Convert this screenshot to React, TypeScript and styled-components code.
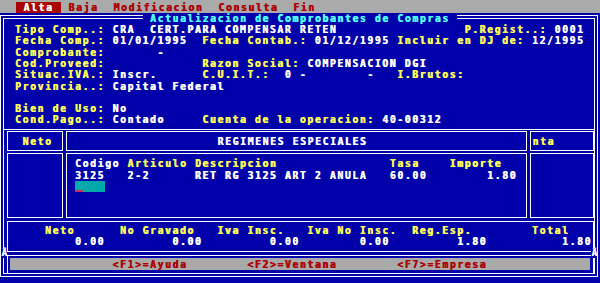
import React from "react";
import styled, { createGlobalStyle } from "styled-components";

const BLUE = "#0000aa";
const YELLOW = "#ffff55";
const WHITE = "#ffffff";
const CYAN = "#55ffff";
const GRAY = "#aaaaaa";
const RED = "#aa0000";
const TEAL = "#00aaaa";
const LINE = "#ffffff";

// text mode cell: 80 x 25 on 600 x 283
const CW = 7.5;
const RH = 11.32;
const FS = 9.7;

const sp = (n: number) => " ".repeat(n);

const GlobalStyle = createGlobalStyle`
	html, body {
		margin: 0;
		padding: 0;
		background: ${BLUE};
	}
	#root {
		width: 600px;
		height: 283px;
	}
`;

const Screen = styled.div`
	position: relative;
	width: 600px;
	height: 283px;
	overflow: hidden;
	background: ${BLUE};
	color: ${WHITE};
	font-family: "DejaVu Sans Mono", "Liberation Mono", monospace;
	font-size: ${FS}px;
	font-weight: bold;
	letter-spacing: ${CW - FS * 0.6021}px;
	line-height: ${RH}px;
	white-space: pre;
	text-shadow: 0.6px 0 0 currentColor;
`;

const MenuBar = styled.div`
	display: flex;
	height: 12.7px;
	padding-left: 16px;
	background: ${GRAY};
`;

const MenuItem = styled.div<{ $active?: boolean }>`
	margin-top: 1.5px;
	height: 11.2px;
	padding: 0 ${CW}px;
	line-height: 11px;
	background: ${(p) => (p.$active ? RED : "transparent")};
	color: ${(p) => (p.$active ? WHITE : RED)};
`;

const Window = styled.div`
	position: relative;
	margin-top: 2.3px;
	width: 598px;
	box-sizing: border-box;
	border: 4px double ${LINE};
`;

const Title = styled.div`
	position: absolute;
	top: -6.3px;
	left: 138.5px;
	background: ${BLUE};
	color: ${CYAN};
`;

const Fields = styled.div`
	padding: 5px 0 0 11px;
`;

const Line = styled.div`
	height: ${RH}px;
`;

const Label = styled.span`
	color: ${YELLOW};
`;

const Value = styled.span`
	color: ${WHITE};
`;

const Divider = styled.div<{ $gap: number }>`
	margin-top: ${(p) => p.$gap}px;
	border-top: 1px solid ${LINE};
`;

const Panels = styled.div`
	display: grid;
	grid-template-columns: 56px 461px 64px;
	grid-template-rows: 20px 65px;
	column-gap: 3px;
	row-gap: 2px;
	margin: 1.5px 0 0 2.5px;
`;

const Cell = styled.div<{ $pad: number; $head?: boolean }>`
	box-sizing: border-box;
	border: 1px solid ${LINE};
	padding-left: ${(p) => p.$pad}px;
	padding-top: ${(p) => (p.$head ? 3.8 : 4)}px;
	overflow: hidden;
`;

const InputField = styled.div`
	position: relative;
	width: ${4 * CW}px;
	height: ${RH}px;
	background: ${TEAL};

	&::after {
		content: "";
		position: absolute;
		left: 0;
		bottom: 0;
		width: ${CW}px;
		height: 2px;
		background: #c83050;
	}
`;

const Totals = styled.div`
	margin: 2.5px 0 0 2.5px;
	width: 587px;
	height: 31px;
	box-sizing: border-box;
	border: 1px solid ${LINE};
	padding: 3px 0 0 37.5px;
`;

const StatusFrame = styled.div`
	margin: 3px 0 0 2.5px;
	width: 587px;
	box-sizing: border-box;
	border: 1px solid ${LINE};
	border-bottom: none;
	padding: 2.5px 2.5px 3px;
`;

const StatusBar = styled.div`
	height: 11.5px;
	padding-left: 102.5px;
	background: ${GRAY};
	color: ${RED};
	line-height: 14.5px;
`;

const Glitch = styled.span<{ $x: number }>`
	position: absolute;
	top: 248px;
	left: ${(p) => p.$x}px;
	padding: 0 0.5px;
	background: ${BLUE};
	font-size: 9px;
	line-height: 10px;
	letter-spacing: 0;
`;

export default function App() {
	return (
		<Screen>
			<GlobalStyle />
			<MenuBar>
				<MenuItem $active>Alta</MenuItem>
				<MenuItem>Baja</MenuItem>
				<MenuItem>Modificacion</MenuItem>
				<MenuItem>Consulta</MenuItem>
				<MenuItem>Fin</MenuItem>
			</MenuBar>

			<Window>
				<Title>{" Actualizacion de Comprobantes de Compras "}</Title>

				<Fields>
					<Line>
						<Label>{"Tipo Comp..: "}</Label>
						<Value>{"CRA  CERT.PARA COMPENSAR RETEN"}</Value>
						{sp(17)}
						<Label>{"P.Regist..: "}</Label>
						<Value>{"0001"}</Value>
					</Line>
					<Line>
						<Label>{"Fecha Comp.: "}</Label>
						<Value>{"01/01/1995"}</Value>
						{sp(2)}
						<Label>{"Fecha Contab.: "}</Label>
						<Value>{"01/12/1995"}</Value>
						{sp(1)}
						<Label>{"Incluir en DJ de: "}</Label>
						<Value>{"12/1995"}</Value>
					</Line>
					<Line>
						<Label>{"Comprobante: "}</Label>
						<Value>{sp(6) + "-"}</Value>
					</Line>
					<Line>
						<Label>{"Cod.Proveed: "}</Label>
						{sp(12)}
						<Label>{"Razon Social: "}</Label>
						<Value>{"COMPENSACION DGI"}</Value>
					</Line>
					<Line>
						<Label>{"Situac.IVA.: "}</Label>
						<Value>{"Inscr."}</Value>
						{sp(6)}
						<Label>{"C.U.I.T.: "}</Label>
						<Value>{" 0 -" + sp(8) + "-"}</Value>
						{sp(3)}
						<Label>{"I.Brutos:"}</Label>
					</Line>
					<Line>
						<Label>{"Provincia..: "}</Label>
						<Value>{"Capital Federal"}</Value>
					</Line>
					<Line />
					<Line>
						<Label>{"Bien de Uso: "}</Label>
						<Value>{"No"}</Value>
					</Line>
					<Line>
						<Label>{"Cond.Pago..: "}</Label>
						<Value>{"Contado"}</Value>
						{sp(5)}
						<Label>{"Cuenta de la operacion: "}</Label>
						<Value>{"40-00312"}</Value>
					</Line>
				</Fields>

				<Divider $gap={3.1} />

				<Panels>
					<Cell $head $pad={15}>
						<Label>Neto</Label>
					</Cell>
					<Cell $head $pad={151}>
						<Value>REGIMENES ESPECIALES</Value>
					</Cell>
					<Cell $head $pad={2}>
						<Label>nta</Label>
					</Cell>

					<Cell $pad={0} />
					<Cell $pad={8.5}>
						<Line>
							<Value>{"Codigo "}</Value>
							<Label>{"Articulo Descripcion" + sp(15) + "Tasa" + sp(4) + "Importe"}</Label>
						</Line>
						<Line>
							<Value>{"3125" + sp(3) + "2-2" + sp(6) + "RET RG 3125 ART 2 ANULA" + sp(3) + "60.00" + sp(8) + "1.80"}</Value>
						</Line>
						<InputField />
					</Cell>
					<Cell $pad={0} />
				</Panels>

				<Totals>
					<Line>
						<Label>{"Neto" + sp(6) + "No Gravado" + sp(3) + "Iva Insc." + sp(3) + "Iva No Insc." + sp(2) + "Reg.Esp." + sp(8) + "Total"}</Label>
					</Line>
					<Line>
						<Value>{sp(4) + "0.00" + sp(9) + "0.00" + sp(9) + "0.00" + sp(8) + "0.00" + sp(9) + "1.80" + sp(10) + "1.80"}</Value>
					</Line>
				</Totals>

				<StatusFrame>
					<StatusBar>{"<F1>=Ayuda" + sp(8) + "<F2>=Ventana" + sp(8) + "<F7>=Empresa"}</StatusBar>
				</StatusFrame>
			</Window>

			<Glitch $x={1}>Â</Glitch>
			<Glitch $x={591}>Â</Glitch>
		</Screen>
	);
}
